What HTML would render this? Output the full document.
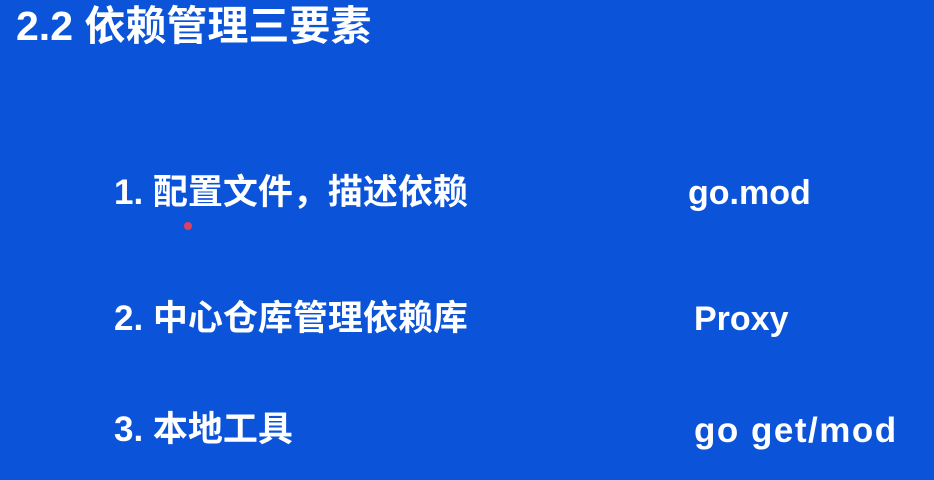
<!DOCTYPE html>
<html><head><meta charset="utf-8"><style>
html,body{margin:0;padding:0}
body{width:934px;height:480px;background:#0b54da;overflow:hidden;position:relative;font-family:"Liberation Sans","Noto Sans CJK SC",sans-serif;color:#fff;font-weight:bold}
.t{position:absolute;white-space:nowrap;line-height:1}
</style></head><body>
<div class="t" style="left:16px;top:6px;font-size:41px">2.2 依赖管理三要素</div>
<div class="t" style="left:114px;top:175px;font-size:35px">1. 配置文件，描述依赖</div>
<div class="t" style="left:688px;top:176px;font-size:34px">go.mod</div>
<div class="t" style="left:114px;top:301px;font-size:35px">2. 中心仓库管理依赖库</div>
<div class="t" style="left:694px;top:302px;font-size:34px">Proxy</div>
<div class="t" style="left:114px;top:412px;font-size:35px">3. 本地工具</div>
<div class="t" style="left:694px;top:413px;font-size:35px;letter-spacing:1.5px">go get/mod</div>
<div style="position:absolute;left:184px;top:222px;width:8px;height:8px;border-radius:50%;background:#e04060"></div>
</body></html>
